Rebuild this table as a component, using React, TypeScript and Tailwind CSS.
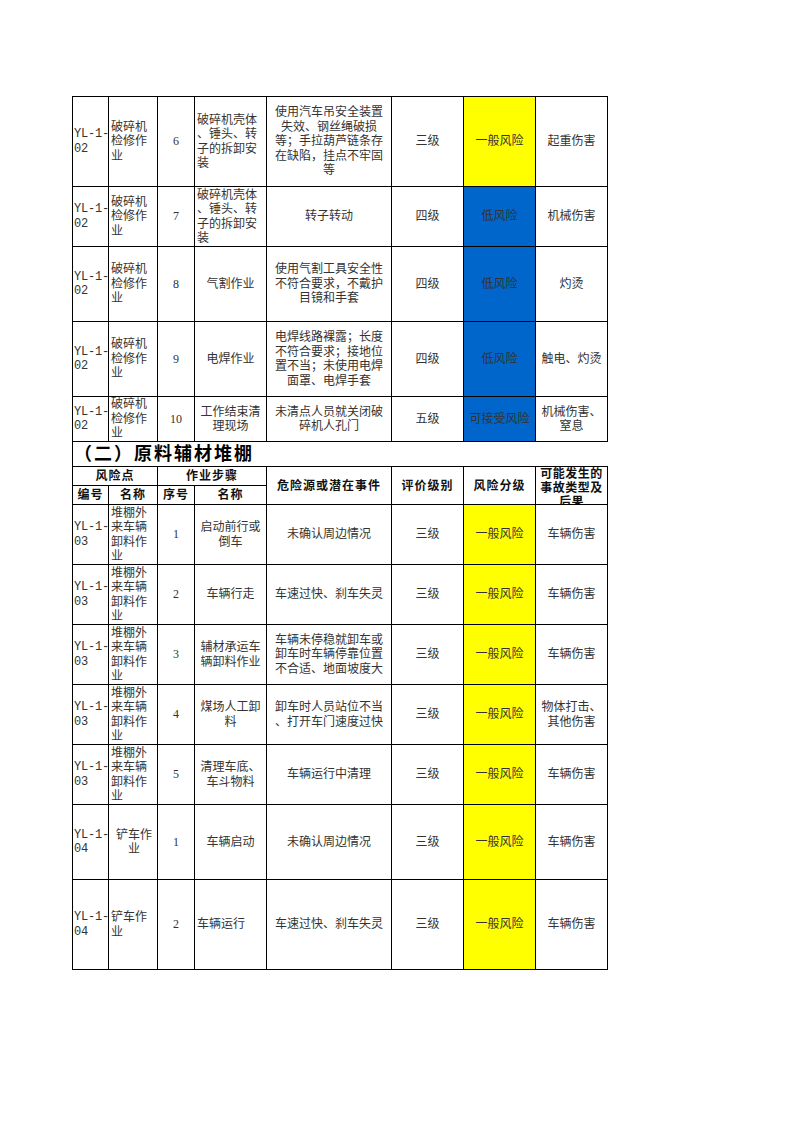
import React from 'react';

type Align = 'l' | 'c';

type Row = {
  h: string;
  code: string;
  name: string;
  nameAlign?: Align;
  no: string;
  step: string;
  stepAlign?: Align;
  hazard: string;
  grade: string;
  level: string;
  color: 'y' | 'b';
  result: string;
};

const FONT = { fontFamily: '"Liberation Serif", "Noto Sans CJK SC", serif' };
const MONO = { fontFamily: '"Liberation Mono", "Noto Sans CJK SC", monospace' };

const part1: Row[] = [
  {
    h: 'h-[90px]', code: 'YL-1-\n02', name: '破碎机\n检修作\n业', no: '6',
    step: '破碎机壳体\n、锤头、转\n子的拆卸安\n装', stepAlign: 'l',
    hazard: '使用汽车吊安全装置\n失效、钢丝绳破损\n等；手拉葫芦链条存\n在缺陷，挂点不牢固\n等',
    grade: '三级', level: '一般风险', color: 'y', result: '起重伤害',
  },
  {
    h: 'h-[60px]', code: 'YL-1-\n02', name: '破碎机\n检修作\n业', no: '7',
    step: '破碎机壳体\n、锤头、转\n子的拆卸安\n装', stepAlign: 'l',
    hazard: '转子转动', grade: '四级', level: '低风险', color: 'b', result: '机械伤害',
  },
  {
    h: 'h-[75px]', code: 'YL-1-\n02', name: '破碎机\n检修作\n业', no: '8', step: '气割作业',
    hazard: '使用气割工具安全性\n不符合要求，不戴护\n目镜和手套',
    grade: '四级', level: '低风险', color: 'b', result: '灼烫',
  },
  {
    h: 'h-[75px]', code: 'YL-1-\n02', name: '破碎机\n检修作\n业', no: '9', step: '电焊作业',
    hazard: '电焊线路裸露；长度\n不符合要求；接地位\n置不当；未使用电焊\n面罩、电焊手套',
    grade: '四级', level: '低风险', color: 'b', result: '触电、灼烫',
  },
  {
    h: 'h-[45px]', code: 'YL-1-\n02', name: '破碎机\n检修作\n业', no: '10', step: '工作结束清\n理现场',
    hazard: '未清点人员就关闭破\n碎机人孔门',
    grade: '五级', level: '可接受风险', color: 'b', result: '机械伤害、\n窒息',
  },
];

const yard = '堆棚外\n来车辆\n卸料作\n业';

const part2: Row[] = [
  {
    h: 'h-[60px]', code: 'YL-1-\n03', name: yard, no: '1', step: '启动前行或\n倒车',
    hazard: '未确认周边情况', grade: '三级', level: '一般风险', color: 'y', result: '车辆伤害',
  },
  {
    h: 'h-[60px]', code: 'YL-1-\n03', name: yard, no: '2', step: '车辆行走',
    hazard: '车速过快、刹车失灵', grade: '三级', level: '一般风险', color: 'y', result: '车辆伤害',
  },
  {
    h: 'h-[60px]', code: 'YL-1-\n03', name: yard, no: '3', step: '辅材承运车\n辆卸料作业',
    hazard: '车辆未停稳就卸车或\n卸车时车辆停靠位置\n不合适、地面坡度大',
    grade: '三级', level: '一般风险', color: 'y', result: '车辆伤害',
  },
  {
    h: 'h-[60px]', code: 'YL-1-\n03', name: yard, no: '4', step: '煤场人工卸\n料',
    hazard: '卸车时人员站位不当\n、打开车门速度过快',
    grade: '三级', level: '一般风险', color: 'y', result: '物体打击、\n其他伤害',
  },
  {
    h: 'h-[60px]', code: 'YL-1-\n03', name: yard, no: '5', step: '清理车底、\n车斗物料',
    hazard: '车辆运行中清理', grade: '三级', level: '一般风险', color: 'y', result: '车辆伤害',
  },
  {
    h: 'h-[75px]', code: 'YL-1-\n04', name: '铲车作\n业', nameAlign: 'c', no: '1', step: '车辆启动',
    hazard: '未确认周边情况', grade: '三级', level: '一般风险', color: 'y', result: '车辆伤害',
  },
  {
    h: 'h-[90px]', code: 'YL-1-\n04', name: '铲车作\n业', no: '2', step: '车辆运行', stepAlign: 'l',
    hazard: '车速过快、刹车失灵', grade: '三级', level: '一般风险', color: 'y', result: '车辆伤害',
  },
];

const td = 'border border-black p-0 align-middle text-[12px] leading-[14.5px] text-[#333]';

function DataRow({ r }: { r: Row }) {
  const fill = r.color === 'y' ? 'bg-[#ffff00]' : 'bg-[#0066cc]';
  return (
    <tr className={r.h}>
      <td className={`${td} whitespace-pre text-left pl-[1px] text-[10.5px] tracking-[-0.2px]`} style={MONO}>{r.code}</td>
      <td className={`${td} whitespace-pre-line pl-[2px] ${r.nameAlign === 'c' ? 'text-center' : 'text-left'}`}>{r.name}</td>
      <td className={`${td} text-center`}>{r.no}</td>
      <td className={`${td} whitespace-pre-line ${r.stepAlign === 'l' ? 'text-left pl-[2px]' : 'text-center'}`}>{r.step}</td>
      <td className={`${td} whitespace-pre-line text-center`}>{r.hazard}</td>
      <td className={`${td} text-center`}>{r.grade}</td>
      <td className={`${td} text-center ${fill}`}>{r.level}</td>
      <td className={`${td} whitespace-pre-line text-center`}>{r.result}</td>
    </tr>
  );
}

const th = 'border border-black p-0 align-middle text-center text-[12px] leading-[14px] font-bold text-[#111] tracking-[1px]';

export default function App() {
  return (
    <div className="min-h-[1122px] w-[793px] bg-white pt-[96px] pl-[72px]" style={FONT}>
      <table className="table-fixed border-collapse w-[535px]">
        <colgroup>
          <col className="w-[36px]" />
          <col className="w-[49px]" />
          <col className="w-[37px]" />
          <col className="w-[72px]" />
          <col className="w-[125px]" />
          <col className="w-[72px]" />
          <col className="w-[72px]" />
          <col className="w-[72px]" />
        </colgroup>
        <tbody>
          {part1.map((r, i) => (
            <DataRow key={`a${i}`} r={r} />
          ))}
          <tr className="h-[25px]">
            <td colSpan={8} className="border-l border-black p-0 pl-[1px] align-middle text-[18px] leading-[24px] font-bold text-black tracking-[2px] whitespace-nowrap">
              （二）原料辅材堆棚
            </td>
          </tr>
          <tr className="h-[19px]">
            <td colSpan={2} className={th}>风险点</td>
            <td colSpan={2} className={th}>作业步骤</td>
            <td rowSpan={2} className={th}>危险源或潜在事件</td>
            <td rowSpan={2} className={th}>评价级别</td>
            <td rowSpan={2} className={th}>风险分级</td>
            <td rowSpan={2} className={`${th} align-top`}>
              <div className="h-[37px] overflow-hidden whitespace-pre-line tracking-[0.5px]">
                {'可能发生的\n事故类型及\n后果'}
              </div>
            </td>
          </tr>
          <tr className="h-[19px]">
            <td className={th}>编号</td>
            <td className={th}>名称</td>
            <td className={th}>序号</td>
            <td className={th}>名称</td>
          </tr>
          {part2.map((r, i) => (
            <DataRow key={`b${i}`} r={r} />
          ))}
        </tbody>
      </table>
    </div>
  );
}
